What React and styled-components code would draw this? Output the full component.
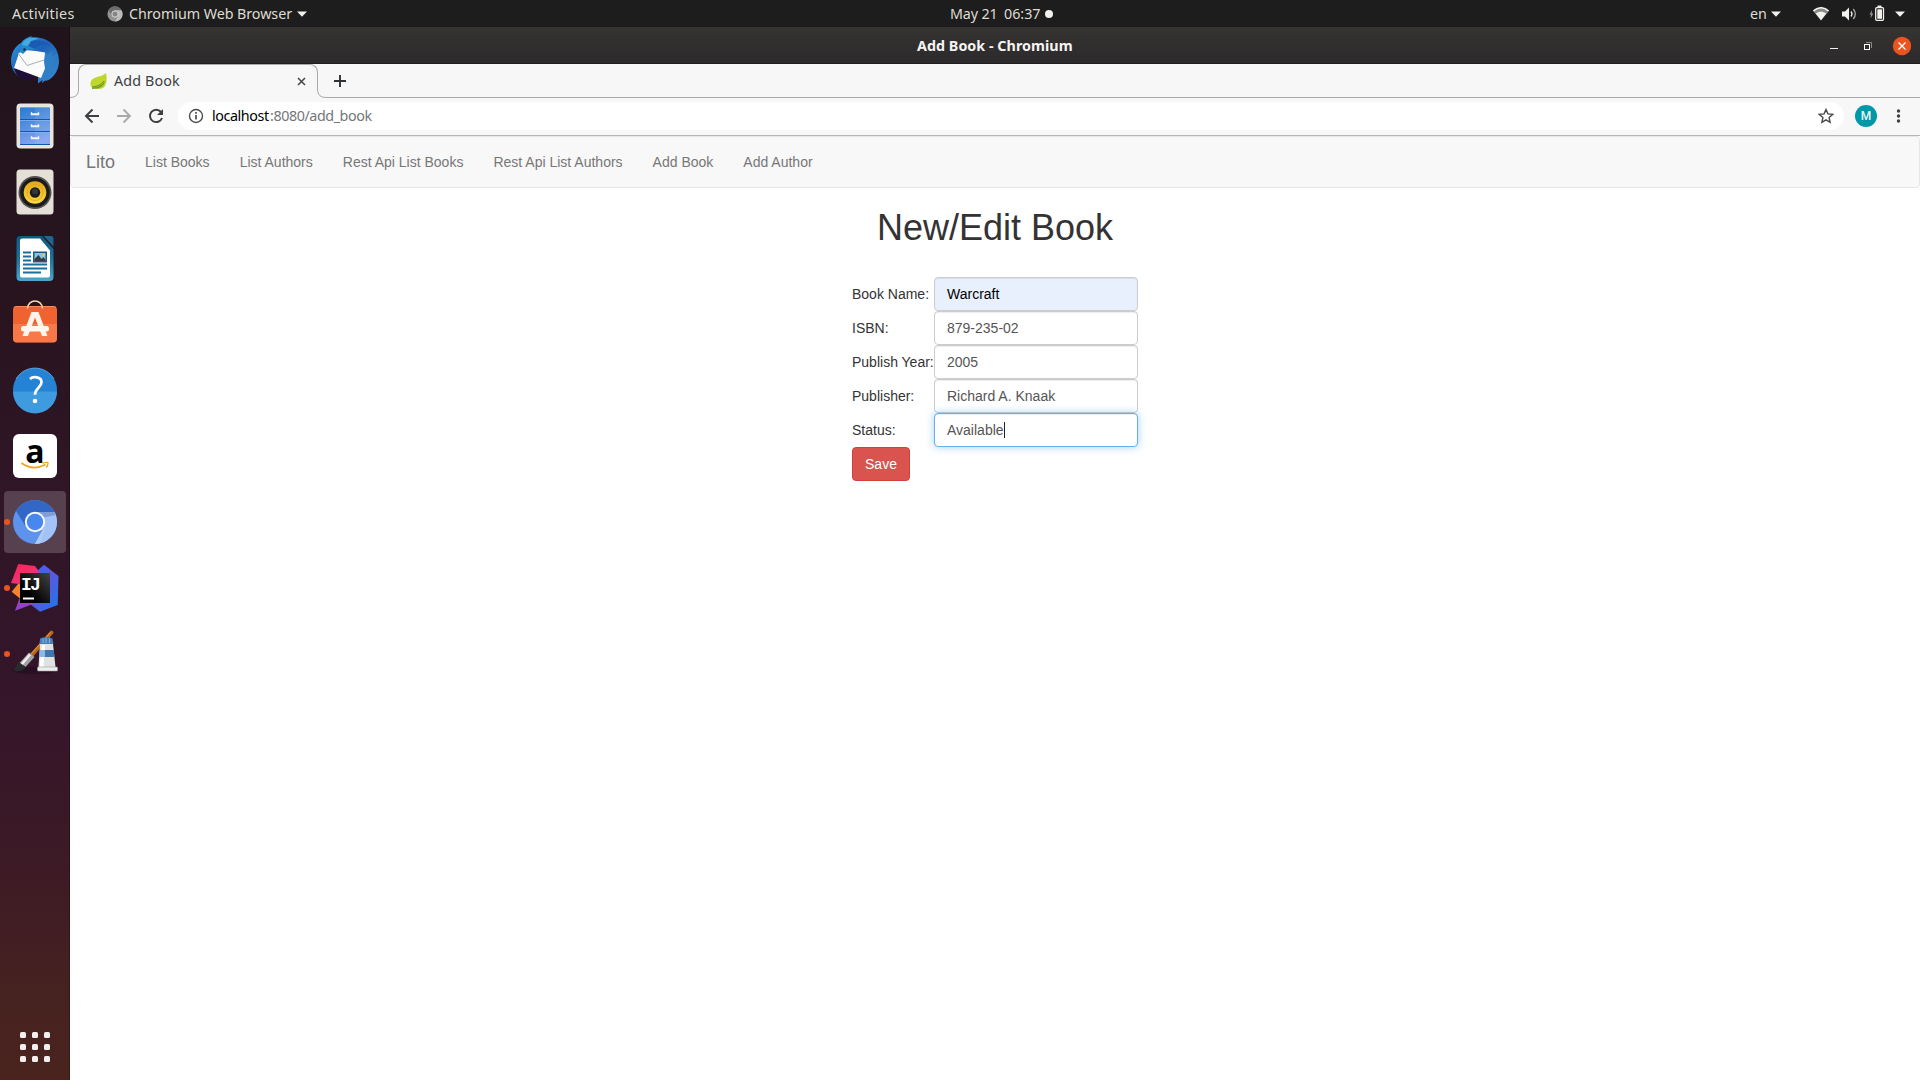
import React from "react";
import styled, { createGlobalStyle } from "styled-components";

const Global = createGlobalStyle`
  *, *::before, *::after { box-sizing: border-box; }
  html, body { margin: 0; padding: 0; }
  body { background: #fff; overflow: hidden; }
  svg { display: block; flex: none; }
`;

const ui = `"Noto Sans", "Open Sans", sans-serif`;
const arial = `"Liberation Sans", Arial, sans-serif`;

const Desktop = styled.div`
  display: flex;
  flex-direction: column;
  width: 1920px;
  height: 1080px;
  font-family: ${ui};
`;

const TopBar = styled.header`
  display: grid;
  grid-template-columns: 950px 1fr auto;
  align-items: center;
  flex: none;
  height: 27px;
  background: #1d1d1d;
`;

const Group = styled.div`
  display: flex;
  align-items: center;
  height: 27px;
  padding-left: ${(p) => p.$left || 0}px;
  padding-right: ${(p) => p.$right || 0}px;
`;

const Label = styled.span`
  flex: none;
  width: ${(p) => p.$w}px;
  white-space: pre;
  font-family: ${ui};
  font-size: ${(p) => p.$size || 14.3}px;
  font-weight: ${(p) => (p.$bold ? 700 : 400)};
  letter-spacing: ${(p) => p.$track || 0}px;
  line-height: 20px;
  color: ${(p) => p.$color || "#dfdbd2"};
`;

const Gap = styled.span`
  flex: none;
  width: ${(p) => p.$w}px;
`;

const Workspace = styled.div`
  display: flex;
  flex: 1;
  min-height: 0;
`;

const Dock = styled.nav`
  display: flex;
  flex-direction: column;
  align-items: center;
  gap: 4px;
  flex: none;
  width: 70px;
  padding: 2px 0 18px;
  background: linear-gradient(#20131b 0%, #28141f 26%, #301626 45%, #34152a 63%, #3c1a26 79%, #462220 92%, #4a231e 100%);
  box-shadow: inset -1px 0 0 rgba(0, 0, 0, 0.25);
`;

const DockItem = styled.div`
  position: relative;
  display: flex;
  align-items: center;
  justify-content: center;
  flex: none;
  width: 62px;
  height: 62px;
  border-radius: 4px;
  background: ${(p) => (p.$active ? "rgba(255,255,255,0.19)" : "transparent")};
`;

const RunningDot = styled.span`
  position: absolute;
  left: 0;
  top: 28px;
  width: 6px;
  height: 6px;
  border-radius: 50%;
  background: #e95420;
`;

const AppsGrid = styled.div`
  display: grid;
  grid-template-columns: repeat(3, 6px);
  grid-auto-rows: 6px;
  gap: 6px;
  margin-top: auto;
`;

const AppsDot = styled.span`
  border-radius: 1.5px;
  background: #f2f0ef;
`;

const Window = styled.main`
  display: flex;
  flex-direction: column;
  flex: 1;
  min-width: 0;
  background: #fff;
`;

const TitleBar = styled.div`
  display: grid;
  grid-template-columns: 1fr auto 1fr;
  align-items: center;
  flex: none;
  height: 37px;
  padding-top: 1px;
  background: linear-gradient(#353431, #2c2a2b);
  border-bottom: 1px solid #201f1f;
`;

const WindowButtons = styled.div`
  display: flex;
  justify-content: flex-end;
  padding-right: 9px;
`;

const TabStrip = styled.div`
  display: flex;
  flex: none;
  height: 34px;
  background: #f7f7f7;
`;

const TabCurve = styled.div`
  flex: none;
  width: 8px;
  display: flex;
  justify-content: ${(p) => (p.$right ? "flex-end" : "flex-start")};
`;

const Tab = styled.div`
  display: flex;
  align-items: center;
  flex: none;
  width: 240px;
  height: 26px;
  padding: 7px 0 0 11px;
  border: 1px solid #a9a9a9;
  border-bottom: 0;
  border-radius: 8px 8px 0 0;
`;

const NewTab = styled.div`
  display: flex;
  align-items: center;
  flex: 1;
  padding-left: 7px;
  border-bottom: 1px solid #a9a9a9;
`;

const Toolbar = styled.div`
  display: flex;
  align-items: center;
  flex: none;
  height: 38px;
  padding: 0 0 1px 13px;
  background: #f7f7f7;
  border-bottom: 1px solid #b6b6b6;
`;

const Omnibox = styled.div`
  display: flex;
  align-items: center;
  flex: none;
  width: 1666px;
  height: 28px;
  margin-left: 13px;
  padding: 0 10px;
  border-radius: 14px;
  background: #fff;
`;

const Spacer = styled.span`
  flex: 1;
`;

const Avatar = styled.div`
  display: flex;
  align-items: center;
  justify-content: center;
  flex: none;
  width: 22px;
  height: 22px;
  margin: 0 18px 0 11px;
  border-radius: 50%;
  background: #0097a7;
  color: #e8f8f9;
  font: 500 12px/22px Roboto, sans-serif;
`;

const Page = styled.section`
  display: flex;
  flex-direction: column;
  align-items: center;
  flex: 1;
  font: 14px/20px ${arial};
  color: #333;
`;

const NavBar = styled.nav`
  display: flex;
  align-items: center;
  width: 100%;
  height: 52px;
  padding: 0 15px;
  border: 1px solid #e7e7e7;
  border-radius: 4px;
  background: #f8f8f8;
  color: #777;
`;

const Brand = styled.a`
  font-size: 18px;
  line-height: 20px;
  margin-right: 15px;
`;

const NavLink = styled.a`
  padding: 0 15px;
`;

const Heading = styled.h1`
  margin: 20px 0 29px;
  font-size: 36px;
  font-weight: 400;
  line-height: 40px;
`;

const Form = styled.div`
  display: grid;
  grid-template-columns: 82px 204px;
  grid-auto-rows: 34px;
  align-items: center;
  width: 286px;
`;

const FieldLabel = styled.label`
  white-space: nowrap;
`;

const Field = styled.div`
  display: flex;
  align-items: center;
  height: 34px;
  padding: 6px 12px;
  border: 1px solid ${(p) => (p.$focus ? "#66afe9" : "#ccc")};
  border-radius: 4px;
  background: ${(p) => (p.$filled ? "#e8f0fe" : "#fff")};
  color: ${(p) => (p.$filled ? "#000" : "#555")};
  box-shadow: ${(p) =>
    p.$focus
      ? "inset 0 1px 1px rgba(0,0,0,.075), 0 0 8px rgba(102,175,233,.6)"
      : "inset 0 1px 1px rgba(0,0,0,.075)"};
`;

const Caret = styled.span`
  width: 1px;
  height: 16px;
  background: #222;
`;

const SaveButton = styled.button`
  width: 58px;
  height: 34px;
  padding: 0;
  border: 1px solid #d43f3a;
  border-radius: 4px;
  background: #d9534f;
  color: #fff;
  font: 14px/20px ${arial};
`;

const Icon = ({ children, w = 48, h = w, box }) => (
  <svg width={w} height={h} viewBox={box || `0 0 ${w} ${h}`} fill="none">
    {children}
  </svg>
);

const Triangle = () => (
  <Icon w={10} h={6}>
    <path d="M0 .5h10L5 5.7z" fill="#f2f1ee" />
  </Icon>
);

const Mail = () => (
  <Icon>
    <defs>
      <linearGradient id="mailBlue" x1="0" y1="0" x2="1" y2="1">
        <stop offset="0" stopColor="#2d9ee0" />
        <stop offset=".45" stopColor="#1f62b8" />
        <stop offset="1" stopColor="#3c8fd8" />
      </linearGradient>
    </defs>
    <path d="M10 7C13 3 16 1 21 0l-1 1.500C35 0 48 9 48 25c0 9-5 17-13 20l1-2-5 4 .5-3-4.500 3.500V40L4 33l7 9C4 39 0 33 0 25 0 17 4 10 10 7z" fill="url(#mailBlue)" />
    <path d="M3 32l22 8-6 4H12C7 41 4 37 3 32z" fill="#1f0f36" />
    <path d="M11 8c4-7 11-7 17-5-6 0-10 4-12 8l-4 3z" fill="#42abdf" />
    <path d="M20 5c8-2 16 0 19 5-5-2-10-1-14 2l-9 2z" fill="#1c5bb4" />
    <path d="M33 16l4 2 5-3-1 5 6-2-4 6 4-1-5 6 5 1-7 5 3 2-6 3 2 3-6 2-1-8z" fill="#2f7fc6" />
    <path d="M8 17l5-3 12 1 9 1.500-1 9 1 7-4 9.500L3 32z" fill="#fbfbfb" />
    <path d="M7 17l9 12.500L33 24" stroke="#a5b0b8" strokeWidth="1" />
    <path d="M9 16l2-7 6 1 7 3-8 1-4 4z" fill="#2588c9" />
    <circle cx="13.500" cy="13.500" r="1.300" fill="#142f53" />
  </Icon>
);

const Files = () => (
  <Icon>
    <defs>
      <linearGradient id="drawer" x1="0" y1="0" x2=".3" y2="1">
        <stop stopColor="#267bd0" />
        <stop offset="1" stopColor="#80a2f0" />
      </linearGradient>
    </defs>
    <rect x="5.500" y="1.500" width="37" height="45" rx="4" fill="#e9e5de" />
    <rect x="9" y="5" width="30" height="38" rx="1.5" fill="url(#drawer)" />
    <path d="M24 5h15v38H24z" fill="#fff" opacity=".08" />
    <path d="M9 17.500h30M9 29.500h30M9 42.500h30" stroke="#1556a8" />
    <path d="M9 5.500h30M9 18.500h30M9 30.500h30" stroke="#88b9ef" strokeWidth=".7" />
    {[11, 23, 35].map((y) => (
      <path key={y} d={`M20 ${y - 0.5}v2.500h8v-2.500h-1v1h-6v-1z`} fill="#f4f4f4" stroke="#f4f4f4" strokeWidth=".5" />
    ))}
  </Icon>
);

const Speaker = () => (
  <Icon>
    <defs>
      <linearGradient id="cone" x1="0" y1="0" x2="0" y2="1">
        <stop stopColor="#e0a91a" />
        <stop offset="1" stopColor="#ffd83c" />
      </linearGradient>
    </defs>
    <rect x="5.500" y="1.500" width="37" height="45" rx="3.500" fill="#e4e0d7" />
    <circle cx="24" cy="24.500" r="16.500" fill="#55534f" />
    <circle cx="24" cy="24.500" r="14.800" fill="#1b1b1c" />
    <circle cx="24" cy="24.500" r="11.300" fill="url(#cone)" />
    <circle cx="24" cy="24.500" r="8" stroke="#cf9d19" strokeWidth=".6" />
    <circle cx="24" cy="24.500" r="5.200" fill="#1b1c1d" />
    <circle cx="24" cy="23.500" r="3" fill="#343639" />
  </Icon>
);

const Writer = () => (
  <Icon>
    <defs>
      <linearGradient id="writer" x1="0" y1="0" x2="0" y2="1">
        <stop stopColor="#11597f" />
        <stop offset=".5" stopColor="#1d719b" />
        <stop offset="1" stopColor="#4fa6cd" />
      </linearGradient>
    </defs>
    <path d="M9.500 2H31l11.500 13v28a4 4 0 0 1-4 4h-29a4 4 0 0 1-4-4V6a4 4 0 0 1 4-4z" fill="url(#writer)" />
    <path d="M32.500 2H40q2.500 0 2.500 2.500v8z" fill="#21658e" />
    <path d="M11 4.500h18l10 12v25q0 2-2 2H11q-2 0-2-2v-35q0-2 2-2z" fill="#fff" />
    <path d="M12 18.500h8M12 22.500h8M12 26.500h8M12 30.500h24M12 34.500h24M12 38.500h18" stroke="#1b6f99" strokeWidth="1.800" />
    <rect x="22" y="17.500" width="14" height="11" fill="#1b5b80" />
    <rect x="23.500" y="19" width="11" height="8" fill="#8bc1e2" />
    <path d="M23.500 27v-2l4-4 3 4 2-2 2 3v1z" fill="#343c3d" />
    <circle cx="32.500" cy="21" r="1.300" fill="#f6c739" />
  </Icon>
);

const Software = () => (
  <Icon>
    <rect x="2" y="6" width="44" height="36.500" rx="4" fill="#f0622f" />
    <path d="M2 24h44v14.500a4 4 0 0 1-4 4H6a4 4 0 0 1-4-4z" fill="#ff8a5b" opacity=".55" />
    <path d="M3 7.500q1-1 3-1h36q2 0 3 1" stroke="#f58a5d" />
    <path d="M16.500 8.500C17-1.500 31-1.500 31.500 8.500" stroke="#f5d9b3" strokeWidth="1.500" />
    <path d="M20.500 12h7L36.500 36h-5.500L24 17.500 17 36h-5.500z" fill="#fff3ea" />
    <rect x="10" y="26" width="28" height="5.500" rx="2.500" fill="#fff7f0" />
  </Icon>
);

const Help = () => (
  <Icon>
    <circle cx="24" cy="24" r="22" fill="#2583d5" />
    <path d="M2 25.500h44a22 22 0 0 1-44 0z" fill="#3f9bdf" />
    <path d="M5 13a22 22 0 0 1 38 0" stroke="#70b3ea" strokeWidth=".8" />
    <path d="M19 13c2.500-2.500 11.500-3 11.500 3.200 0 5.500-6.500 5.700-6.500 12.500" stroke="#fff" strokeWidth="2.700" />
    <circle cx="24" cy="35" r="2.300" fill="#fff" />
  </Icon>
);

const AmazonTile = styled.div`
  display: flex;
  flex-direction: column;
  align-items: center;
  width: 44px;
  height: 44px;
  border-radius: 6px;
  background: #fff;
`;

const AmazonLetter = styled.span`
  height: 27px;
  font: 700 32px/34px "Open Sans", sans-serif;
  color: #000;
`;

const Amazon = () => (
  <AmazonTile>
    <AmazonLetter>a</AmazonLetter>
    <Icon w={30} h={9}>
      <path d="M1.500 2C9 7.500 18 7.500 25.500 3.500" stroke="#f6a11e" strokeWidth="1.700" />
      <path d="M22.500 2.200q6-1.800 5.500 0 .2 2-1.800 4.300" stroke="#f6a11e" strokeWidth="1.300" />
    </Icon>
  </AmazonTile>
);

const Chromium = () => (
  <Icon>
    <circle cx="24" cy="24" r="22" fill="#5d92ed" />
    <path d="M5 13A22 22 0 0 1 43.600 14H24L15 29z" fill="#3267c5" />
    <path d="M24 14h19.600A22 22 0 0 1 24 46l9-17z" fill="#a3c3f8" />
    <path d="M24 14h19.600l1 3L31 20z" fill="#7f9fd4" />
    <path d="M33 29L24 46l5-.5 5-14z" fill="#bdd4fb" opacity=".5" />
    <circle cx="24" cy="24" r="10.200" fill="#f7faff" />
    <circle cx="24" cy="24" r="8.200" fill="#4787ee" />
  </Icon>
);

const JetTile = styled.div`
  position: relative;
  width: 48px;
  height: 48px;
`;

const JetText = styled.span`
  position: absolute;
  left: 10px;
  top: 11px;
  font: 700 18px/20px "Liberation Mono", monospace;
  letter-spacing: -1.8px;
  color: #fff;
`;

const IntelliJ = () => (
  <JetTile>
    <Icon>
      <defs>
        <linearGradient id="ijRed" x1="0" y1="0" x2=".7" y2="1">
          <stop stopColor="#ff2255" />
          <stop offset=".6" stopColor="#ee336d" />
          <stop offset="1" stopColor="#a437b8" />
        </linearGradient>
        <linearGradient id="ijBlue" x1="0" y1="0" x2="1" y2="1">
          <stop stopColor="#1c78ed" />
          <stop offset=".45" stopColor="#6155dc" />
          <stop offset="1" stopColor="#167bf0" />
        </linearGradient>
        <linearGradient id="ijBlack" x1="1" y1="0" x2=".3" y2=".7">
          <stop stopColor="#444" />
          <stop offset="1" />
        </linearGradient>
      </defs>
      <path d="M33 .7L47.500 12l-.8 29L29 47.700 19 40 26 7z" fill="url(#ijBlue)" />
      <path d="M7.300 0L24 2l5 7v14L0 19z" fill="url(#ijRed)" />
      <path d="M7 20h6v14.500H9L.7 27.700z" fill="#f78528" />
      <path d="M9 33h14l-1 7L4 46.700z" fill="#9640cb" />
      <rect x="9" y="9" width="30" height="30" fill="url(#ijBlack)" />
      <path d="M12 34.500h11" stroke="#fff" strokeWidth="2" />
    </Icon>
    <JetText>IJ</JetText>
  </JetTile>
);

const Paint = () => (
  <Icon>
    <ellipse cx="24" cy="40.500" rx="23" ry="3.500" fill="#180b16" opacity=".45" />
    <path d="M40.500 2.500L20 26" stroke="#b9651a" strokeWidth="3.800" strokeLinecap="round" />
    <path d="M39.500 2.500L19 25" stroke="#ed9f43" strokeWidth="1" />
    <path d="M18 22.500l5.500 4.500-9 10-6-4z" fill="#a2a2a2" />
    <path d="M19 24.500l-8.500 10" stroke="#f0f0f0" strokeWidth="2.500" />
    <path d="M8.500 32.500l6 4.500c-2 4.500-7.500 4.500-13 4 3.500-2 2.500-6.500 7-8.500z" fill="#272b2d" />
    <path d="M29 8.500q6-3 12.500 0l1 5.500H28.500z" fill="#477fb8" />
    <path d="M32 8.500v4.500M35 8v5M38.500 8.500V13" stroke="#8cb8e0" />
    <path d="M29 14h13l2.500 23H27.500z" fill="#dfe2e1" />
    <path d="M31 15h3l-1.500 22h-4z" fill="#fff" />
    <path d="M28.700 20h14.100l.7 7H28.200z" fill="#4177ae" />
    <path d="M28.700 20h5.300v7h-5.800z" fill="#8db9e4" />
    <rect x="26.500" y="37" width="20" height="4" rx=".8" fill="#ecefee" stroke="#9b9e9e" strokeWidth=".6" />
  </Icon>
);

const dockApps = [
  { art: <Mail /> },
  { art: <Files /> },
  { art: <Speaker /> },
  { art: <Writer /> },
  { art: <Software /> },
  { art: <Help /> },
  { art: <Amazon /> },
  { art: <Chromium />, active: true, running: true },
  { art: <IntelliJ />, running: true },
  { art: <Paint />, running: true },
];

const links = ["List Books", "List Authors", "Rest Api List Books", "Rest Api List Authors", "Add Book", "Add Author"];

const fields = [
  { label: "Book Name:", value: "Warcraft", filled: true },
  { label: "ISBN:", value: "879-235-02" },
  { label: "Publish Year:", value: "2005" },
  { label: "Publisher:", value: "Richard A. Knaak" },
  { label: "Status:", value: "Available", focus: true },
];

export default function App() {
  return (
    <Desktop>
      <Global />
      <TopBar>
        <Group $left={12}>
          <Label $w={62} $track={0.3}>Activities</Label>
          <Gap $w={33} />
          <Icon w={16}>
            <circle cx="8" cy="8" r="7.600" fill="#929292" />
            <path d="M1.500 4A7.600 7.600 0 0 1 14.500 4H8L5 10z" fill="#6d6d6d" />
            <path d="M8 4.500h6.700A7.600 7.600 0 0 1 8 15.600L11 10z" fill="#bcbcbc" />
            <circle cx="8" cy="8" r="3.200" fill="#858585" stroke="#ddd" />
          </Icon>
          <Gap $w={6} />
          <Label $w={163} $track={-0.05}>Chromium Web Browser</Label>
          <Gap $w={5} />
          <Triangle />
        </Group>
        <Group>
          <Label $w={54} $track={-0.15}>May 21</Label>
          <Label $w={41}>06:37</Label>
          <Icon w={8}>
            <circle cx="4" cy="4" r="4" fill="#f2f1ee" />
          </Icon>
        </Group>
        <Group $right={15}>
          <Label $w={21}>en</Label>
          <Triangle />
          <Gap $w={32} />
          <Icon w={16} h={14}>
            <path d="M.3 4.200C5-.3 11-.3 15.700 4.200L8 13.500z" fill="#8a8a88" />
            <path d="M.5 4C5-.3 11-.3 15.500 4" stroke="#f2f1ee" strokeWidth="1.600" />
            <path d="M2.700 6.500c3.500-2.500 7-2.500 10.600 0L8 13.300z" fill="#f2f1ee" />
          </Icon>
          <Gap $w={13} />
          <Icon w={15} h={14}>
            <path d="M0 4.500h3l4-4v13l-4-4H0z" fill="#f2f1ee" />
            <path d="M9 4.500q2 2.500 0 5" stroke="#f2f1ee" strokeWidth="1.300" />
            <path d="M11.300 2q4 5 0 10" stroke="#aaa" strokeWidth="1.300" />
          </Icon>
          <Gap $w={12} />
          <Icon w={16} h={18}>
            <path d="M3 5L.5 9.500H2L1.500 13.500 4.300 8.500H2.700z" fill="#999" />
            <rect x="6.700" y="2.700" width="7.800" height="12.600" rx="1" stroke="#f2f1ee" strokeWidth="1.300" />
            <path d="M8.500 1.300h4" stroke="#f2f1ee" strokeWidth="1.500" />
            <path d="M8.300 4.300h4.700v9.500H8.300z" fill="#f2f1ee" />
          </Icon>
          <Gap $w={10} />
          <Triangle />
        </Group>
      </TopBar>
      <Workspace>
        <Dock>
          {dockApps.map((app, i) => (
            <DockItem key={i} $active={app.active}>
              {app.running && <RunningDot />}
              {app.art}
            </DockItem>
          ))}
          <AppsGrid>
            {Array.from({ length: 9 }, (_, i) => (
              <AppsDot key={i} />
            ))}
          </AppsGrid>
        </Dock>
        <Window>
          <TitleBar>
            <span />
            <Label $w={156} $bold $color="#f5f4f2" $track={0.04}>Add Book - Chromium</Label>
            <WindowButtons>
              <Icon w={84} h={20}>
                <path d="M3 12.500h8" stroke="#f1f1f1" />
                <path d="M39 6.500h5.500V12" stroke="#8a8a88" />
                <rect x="37.500" y="8.500" width="5" height="5" stroke="#fff" />
                <circle cx="75" cy="10" r="9.200" fill="#e95420" />
                <path d="M71.500 6.500l7 7m0-7l-7 7" stroke="#fff" strokeWidth="1.300" />
              </Icon>
            </WindowButtons>
          </TitleBar>
          <TabStrip>
            <TabCurve>
              <Icon w={9} h={34}>
                <path d="M0 33.500q8.500 0 8.500-8" stroke="#a9a9a9" />
              </Icon>
            </TabCurve>
            <Tab>
              <Icon w={17}>
                <path d="M16 0c2 9-.5 16-7 16-5 .2-9-1-8.500-6C1 3 11 5 16 0z" fill="#bfd62d" />
                <path d="M2 14.500c6-.2 10-2 13-7-1 7-6 8-13 8.500z" fill="#6fa52b" />
                <path d="M2 14c5-.5 9-2 12-6" stroke="#51811e" strokeWidth=".8" />
              </Icon>
              <Gap $w={7} />
              <Label $w={183} $color="#3c4043" $track={0.15}>Add Book</Label>
              <Icon w={9}>
                <path d="M1 1l7 7m0-7L1 8" stroke="#444" strokeWidth="1.500" />
              </Icon>
            </Tab>
            <TabCurve $right>
              <Icon w={9} h={34}>
                <path d="M.5 25.500q0 8 8.500 8" stroke="#a9a9a9" />
              </Icon>
            </TabCurve>
            <NewTab>
              <Icon w={14}>
                <path d="M1 7h12M7 1v12" stroke="#303336" strokeWidth="1.900" />
              </Icon>
            </NewTab>
          </TabStrip>
          <Toolbar>
            <Icon w={82} h={18}>
              <path d="M16 9H3m6.500-6.500L3 9l6.500 6.500" stroke="#3c4043" strokeWidth="2" />
              <path d="M34 9h13m-6.500-6.500L47 9l-6.500 6.500" stroke="#aaa" strokeWidth="1.800" />
              <path d="M78 5A6.200 6.200 0 1 0 79 11" stroke="#3c4043" strokeWidth="2" />
              <path d="M80 2v6h-6z" fill="#3c4043" />
            </Icon>
            <Omnibox>
              <Icon w={16}>
                <circle cx="8" cy="8" r="6.500" stroke="#4b4e51" strokeWidth="1.400" />
                <path d="M8 7v4.500M8 4v1.700" stroke="#4b4e51" strokeWidth="1.700" />
              </Icon>
              <Gap $w={8} />
              <Label $w={58} $color="#000" $track={-0.42}>localhost</Label>
              <Label $w={104} $color="#747779" $track={-0.42}>:8080/add_book</Label>
              <Spacer />
              <Icon w={16}>
                <path d="M8 1.500l1.900 4.400 4.800.5-3.600 3.200 1 4.700L8 11.900l-4.100 2.400 1-4.700L1.300 6.400l4.800-.5z" stroke="#45484b" strokeWidth="1.400" />
              </Icon>
            </Omnibox>
            <Avatar>M</Avatar>
            <Icon w={26} h={16}>
              {[3, 8, 13].map((y) => (
                <circle key={y} cx="3.500" cy={y} r="1.700" fill="#3c4043" />
              ))}
            </Icon>
          </Toolbar>
          <Page>
            <NavBar>
              <Brand>Lito</Brand>
              {links.map((text) => (
                <NavLink key={text}>{text}</NavLink>
              ))}
            </NavBar>
            <Heading>New/Edit Book</Heading>
            <Form>
              {fields.map((f) => (
                <React.Fragment key={f.label}>
                  <FieldLabel>{f.label}</FieldLabel>
                  <Field $filled={f.filled} $focus={f.focus}>
                    {f.value}
                    {f.focus && <Caret />}
                  </Field>
                </React.Fragment>
              ))}
              <SaveButton>Save</SaveButton>
            </Form>
          </Page>
        </Window>
      </Workspace>
    </Desktop>
  );
}
